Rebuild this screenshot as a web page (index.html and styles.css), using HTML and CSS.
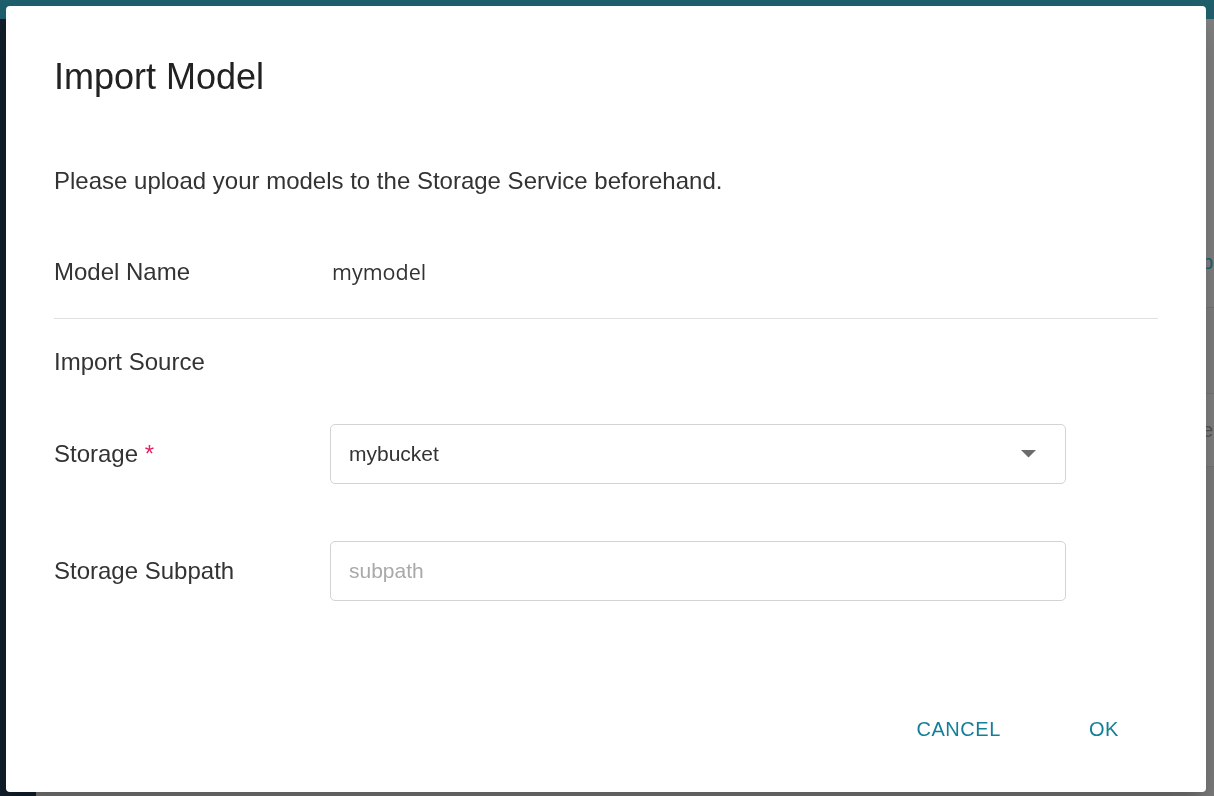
FILE: index.html
```html
<!DOCTYPE html>
<html lang="en">
<head>
<meta charset="utf-8">
<title>Import Model</title>
<link rel="stylesheet" href="styles.css">
</head>
<body>
<div class="page">
  <header class="topbar"></header>
  <div class="frame">
    <aside class="sidebar"></aside>
    <main class="main">
      <div class="toolbar"></div>
      <div class="row row-a"><span class="peek link">p</span></div>
      <div class="row row-b"></div>
      <div class="row row-c"><span class="peek">e</span></div>
    </main>
  </div>
</div>

<div class="overlay">
  <section class="dialog" role="dialog" aria-labelledby="dlg-title">
    <h2 class="title" id="dlg-title">Import Model</h2>
    <p class="intro">Please upload your models to the Storage Service beforehand.</p>

    <div class="field field-name">
      <span class="label">Model Name</span>
      <span class="value">mymodel</span>
    </div>
    <hr class="divider">

    <div class="section">Import Source</div>

    <div class="field field-storage">
      <span class="label">Storage <span class="req">*</span></span>
      <div class="select">
        <span class="select-text">mybucket</span>
        <svg class="caret" width="15" height="8" viewBox="0 0 15 8"><path d="M0 0 L15 0 L7.5 7.5 Z" fill="#6b6b6b"/></svg>
      </div>
    </div>

    <div class="field field-subpath">
      <span class="label">Storage Subpath</span>
      <input class="input" type="text" placeholder="subpath">
    </div>

    <div class="actions">
      <button class="btn" type="button">CANCEL</button>
      <button class="btn" type="button">OK</button>
    </div>
  </section>
</div>
</body>
</html>
```

FILE: styles.css
```css
html, body {
  margin: 0;
  padding: 0;
  height: 100%;
}

body {
  font-family: "Liberation Sans", Arial, sans-serif;
  overflow: hidden;
}

.page {
  display: flex;
  flex-direction: column;
  height: 100vh;
}

.topbar {
  height: 19px;
  background: #3ebed7;
  flex: none;
}

.frame {
  flex: 1;
  display: flex;
}

.sidebar {
  width: 36px;
  background: #223e57;
  flex: none;
}

.main {
  flex: 1;
  background: #f6f6f6;
  display: flex;
  flex-direction: column;
}

.toolbar {
  height: 56px;
  background: #ffffff;
}

.row {
  border-bottom: 1px solid #e8e8e8;
  display: flex;
  justify-content: flex-end;
  align-items: center;
  box-sizing: border-box;
  padding-right: 1px;
  font-size: 20px;
  line-height: 32px;
}

.row-a {
  height: 233px;
  background: #ffffff;
  align-items: flex-start;
  padding-top: 171px;
}

.row-b {
  height: 86px;
  background: #fbfbfb;
}

.row-c {
  height: 73px;
  background: #ffffff;
}

.peek {
  white-space: nowrap;
  color: #aaaaaa;
}

.peek.link {
  color: #3ebed7;
}

.overlay {
  position: fixed;
  inset: 0;
  background: rgba(0, 0, 0, 0.5);
}

.dialog {
  position: absolute;
  top: 6px;
  left: 6px;
  width: 1200px;
  height: 786px;
  box-sizing: border-box;
  background: #ffffff;
  border-radius: 4px;
  padding: 49px 48px 0;
  display: flex;
  flex-direction: column;
  color: #333333;
  box-shadow: 0 11px 15px -7px rgba(0,0,0,0.2), 0 24px 38px 3px rgba(0,0,0,0.14);
}

.title {
  margin: 0;
  font-weight: normal;
  font-size: 36px;
  line-height: 44px;
  color: #222222;
}

.intro {
  margin: 66px 0 0;
  font-size: 24px;
  line-height: 32px;
}

.field {
  display: flex;
  align-items: center;
}

.label {
  width: 276px;
  flex: none;
  font-size: 24px;
  line-height: 32px;
}

.field-name {
  margin-top: 59px;
  align-items: baseline;
}

.value {
  font-family: "Open Sans", "DejaVu Sans", sans-serif;
  font-size: 21.5px;
  margin-left: 2px;
  color: #333333;
}

.divider {
  margin: 30px 0 0;
  border: 0;
  height: 1px;
  background: #e0e0e0;
}

.section {
  margin-top: 27px;
  font-size: 24px;
  line-height: 32px;
}

.field-storage {
  margin-top: 46px;
}

.field-subpath {
  margin-top: 57px;
}

.req {
  color: #e91e63;
}

.select,
.input {
  width: 736px;
  height: 60px;
  box-sizing: border-box;
  border: 1px solid #d3d3d3;
  border-radius: 5px;
  background: #ffffff;
  font-family: "Liberation Sans", Arial, sans-serif;
  font-size: 21px;
}

.select {
  display: flex;
  align-items: center;
  justify-content: space-between;
  padding: 0 29px 0 18px;
}

.select-text {
  color: #333333;
}

.caret {
  display: block;
}

.input {
  padding: 0 18px;
  color: #333333;
  outline: none;
}

.input::placeholder {
  color: #a9a9a9;
}

.actions {
  margin-top: 108px;
  display: flex;
  justify-content: flex-end;
  gap: 40px;
  padding-right: 15px;
}

.btn {
  border: 0;
  background: transparent;
  padding: 0 24px;
  height: 40px;
  line-height: 40px;
  font-family: "Liberation Sans", Arial, sans-serif;
  font-size: 20px;
  letter-spacing: 0.57px;
  color: #147f98;
  cursor: pointer;
}
```
